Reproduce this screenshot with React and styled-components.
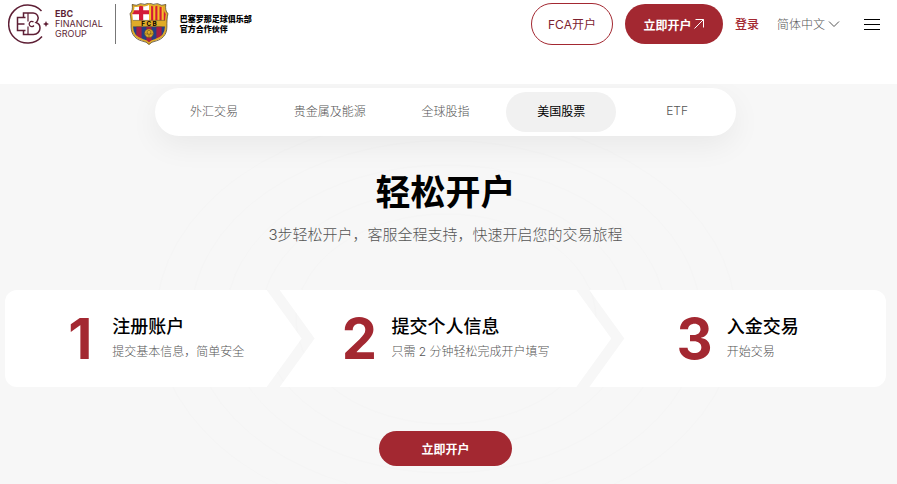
import React, { useState } from 'react';
import styled, { createGlobalStyle } from 'styled-components';

const red = '#a32831';
const wine = '#5e1f35';

const GlobalStyle = createGlobalStyle`
    * {
        box-sizing: border-box;
    }
    body {
        margin: 0;
        background: #fff;
        color: #000;
        font-family: Inter, "Noto Sans CJK SC", sans-serif;
        font-size: 12px;
    }
    button, select {
        font-family: inherit;
        font-size: 12px;
        border: 0;
        padding: 0;
        cursor: pointer;
    }
    h1, h2, p {
        margin: 0;
    }
`

const Header = styled.header`
    display: flex;
    justify-content: space-between;
    align-items: flex-start;
    height: 84px;
    padding: 0 17px 0 8px;
`

const Brand = styled.a`
    display: flex;
    align-items: center;
    height: 48px;
    color: ${wine};
    text-decoration: none;
`

const BrandName = styled.span`
    margin-left: 5px;
    font-size: 9px;
    line-height: 10px;
`

const BrandLine = styled.span`
    display: block;
    font-weight: ${props => props.$bold ? 700 : 400};
`

const Divider = styled.span`
    width: 1px;
    height: 40px;
    margin: 0 13px 0 12px;
    background: #777;
`

const PartnerText = styled.span`
    margin-left: 11px;
    color: #000;
    font-size: 8px;
    font-weight: 900;
    line-height: 10px;
`

const Actions = styled.div`
    display: flex;
    align-items: center;
    height: 48px;
`

const OutlineButton = styled.button`
    width: 82px;
    height: 42px;
    padding-bottom: 2px;
    border: 1px solid ${red};
    border-radius: 21px;
    background: #fff;
    color: #7c2230;
`

const SolidButton = styled.button`
    display: flex;
    align-items: center;
    justify-content: center;
    gap: 3px;
    width: 98px;
    height: 40px;
    margin-left: 12px;
    border-radius: 20px;
    background: ${red};
    color: #fff;
    font-weight: 600;
`

const StartButton = styled(SolidButton)`
    position: relative;
    width: 133px;
    height: 35px;
    margin-left: 0;
`

const LoginLink = styled.a`
    margin-left: 12px;
    padding-bottom: 2px;
    color: ${red};
    font-weight: 500;
    text-decoration: none;
`

const Language = styled.label`
    display: flex;
    align-items: center;
    gap: 3px;
    margin-left: 18px;
`

const LanguageSelect = styled.select`
    appearance: none;
    width: 48px;
    background: none;
    color: #555;
    font-weight: 300;
`

const MenuButton = styled.button`
    display: flex;
    margin-left: 24px;
    background: none;
`

const Section = styled.section`
    position: relative;
    display: flex;
    flex-direction: column;
    align-items: center;
    min-height: 400px;
    padding: 4px 11px 18px 5px;
    background: #f7f7f7;
    overflow: hidden;
`

const Rings = styled.svg`
    position: absolute;
    inset: 0;
    width: 100%;
    height: 100%;
`

const Tabs = styled.div`
    position: relative;
    display: grid;
    grid-template-columns: repeat(5, 1fr);
    gap: 6px;
    width: 100%;
    max-width: 581px;
    padding: 4px;
    border-radius: 24px;
    background: #fff;
    box-shadow: 0 10px 30px rgba(0, 0, 0, 0.06);
`

const Tab = styled.button`
    height: 40px;
    padding-bottom: 4px;
    border-radius: 20px;
    background: ${props => props.$active ? '#f1f1f1' : 'none'};
    color: ${props => props.$active ? '#000' : '#555'};
    font-weight: ${props => props.$active ? 400 : 300};
`

const Title = styled.h1`
    position: relative;
    margin-top: 32px;
    font-size: 35px;
    font-weight: 600;
    line-height: 48px;
`

const Subtitle = styled.p`
    position: relative;
    margin-top: 8px;
    color: #555;
    font-size: 15px;
    font-weight: 300;
    line-height: 22px;
`

const Steps = styled.div`
    position: relative;
    display: flex;
    width: 100%;
    margin: 44px 0;
`

const shapes = {
    first: 'polygon(0 0, calc(100% - 35px) 0, 100% 50%, calc(100% - 35px) 100%, 0 100%)',
    middle: 'polygon(0 0, calc(100% - 35px) 0, 100% 50%, calc(100% - 35px) 100%, 0 100%, 35px 50%)',
    last: 'polygon(0 0, 100% 0, 100% 100%, 0 100%, 35px 50%)',
}

const Step = styled.div`
    display: flex;
    align-items: center;
    justify-content: center;
    gap: 14px;
    flex: ${props => props.$shape === 'middle' ? 332 : 297} 1 0;
    height: 97px;
    background: #fff;
    clip-path: ${props => shapes[props.$shape]};

    & + & {
        margin-left: -22px;
    }
    &:first-child {
        border-radius: 12px 0 0 12px;
    }
    &:last-child {
        border-radius: 0 12px 12px 0;
    }
`

const StepNumber = styled.span`
    min-width: 36px;
    color: ${red};
    font-size: 56px;
    font-weight: 700;
    line-height: 56px;
    text-align: center;
`

const StepTitle = styled.h2`
    font-size: 18px;
    font-weight: 500;
    line-height: 24px;
`

const StepText = styled.p`
    margin-top: 3px;
    color: #555;
    font-weight: 300;
    line-height: 20px;
`

function Logo() {
    return (
        <svg width="42" height="40" viewBox="0 0 42 40" fill="none" stroke={wine} strokeWidth="1.5">
            <path d="M33.500 7A19 19 0 1 0 34 32.500" />
            <path d="M17.500 13.500H9.500v13h8M9.500 20h7" />
            <path d="M15.500 13.500V9h9.500a5 5 0 0 1 4.500 7.500q-.5 1.200-1.500 2c2.500.8 4 2.800 4 5.500a6.500 6.500 0 0 1-6.500 6.500h-10v-4" />
            <path d="M20 9v8.500M20 22.500v8" strokeWidth="1.200" />
            <path d="M25.500 18a2.600 2.600 0 1 0 .4 3.500" strokeWidth="1.300" />
            <path d="M38 17l.9 2.100 2.100.9-2.100.9L38 23l-.9-2.100L35 20l2.100-.9z" fill={wine} stroke="none" />
        </svg>
    )
}

function Crest() {
    return (
        <svg width="40" height="42" viewBox="1 1 38 41" preserveAspectRatio="none">
            <defs>
                <clipPath id="shield">
                    <path d="M5 3.500q4 1.500 7-.8 4 1.800 8-.7 4 2.500 8 .7 3 2.300 7 .8-1 5 2 8c-1 4-1 8-1 13 0 7-5 11-10 12.500q-4 .8-6 3.500-2-2.700-6-3.500C9 35.500 4 31.500 4 24.500c0-5 0-9-1-13q3-3 2-8z" />
                </clipPath>
            </defs>
            <g clipPath="url(#shield)">
                <path fill="#fff" d="M0 0h20v18H0z" />
                <path fill="#d31b37" d="M10.500 0h4v18h-4zM0 8h20v4H0z" />
                <path fill="#f4bd28" d="M20 0h20v18H20z" />
                <path fill="#d31b37" d="M22 0h2v18h-2zM26 0h2v18h-2zM30 0h2v18h-2zM34 0h2v18h-2z" />
                <path fill="#253f86" d="M0 24h40v18H0z" />
                <path fill="#a51d45" d="M8 24h5v18H8zM17.500 24h5v18h-5zM27 24h5v18h-5z" />
                <path fill="#e0ac28" stroke="#65501e" strokeWidth=".6" d="M0 18h40v6H0z" />
            </g>
            <path fill="none" stroke="#e0ac28" strokeWidth="1.800" d="M5 3.500q4 1.500 7-.8 4 1.800 8-.7 4 2.500 8 .7 3 2.300 7 .8-1 5 2 8c-1 4-1 8-1 13 0 7-5 11-10 12.500q-4 .8-6 3.500-2-2.700-6-3.500C9 35.500 4 31.500 4 24.500c0-5 0-9-1-13q3-3 2-8z" />
            <path fill="none" stroke="#4b3b22" strokeWidth=".7" d="M4 2.500q4 1.800 8-.9 4 1.900 8-.8 4 2.700 8 .8 4 2.700 8 .9-1 5.500 2 9c-1 4-1 8-1 13 0 8-5 12-10 13.500q-5 .9-7 3.500-2-2.600-7-3.500C8 36.500 3 32.500 3 24.500c0-5 0-9-1-13q3-3.500 2-9z" />
            <circle cx="20" cy="30.500" r="4.200" fill="#e0ac28" stroke="#65501e" strokeWidth=".5" />
            <path d="M18 29l2-1.500 2 1.500-.8 2.400h-2.400zM16 31l2.800.4M24 31l-2.800.4M20 34.500v-3" fill="none" stroke="#65501e" strokeWidth=".6" />
            <text x="20" y="23.200" textAnchor="middle" fontSize="6" fontWeight="700">F C B</text>
        </svg>
    )
}

const tabs = ['外汇交易', '贵金属及能源', '全球股指', '美国股票', 'ETF']

const steps = [
    { shape: 'first', title: '注册账户', text: '提交基本信息，简单安全' },
    { shape: 'middle', title: '提交个人信息', text: '只需 2 分钟轻松完成开户填写' },
    { shape: 'last', title: '入金交易', text: '开始交易' },
]

const rings = [150, 185, 220, 255, 290]

export default function App() {
    const [active, setActive] = useState('美国股票')

    return (
        <>
            <GlobalStyle />
            <Header>
                <Brand href="#">
                    <Logo />
                    <BrandName>
                        <BrandLine $bold>EBC</BrandLine>
                        <BrandLine>FINANCIAL</BrandLine>
                        <BrandLine>GROUP</BrandLine>
                    </BrandName>
                    <Divider />
                    <Crest />
                    <PartnerText>巴塞罗那足球俱乐部<br />官方合作伙伴</PartnerText>
                </Brand>
                <Actions>
                    <OutlineButton>FCA开户</OutlineButton>
                    <SolidButton>
                        立即开户
                        <svg width="10" height="10" viewBox="0 0 10 10" fill="none" stroke="#fff">
                            <path d="M.5 9.500l9-9M1.500.5h8v8" />
                        </svg>
                    </SolidButton>
                    <LoginLink href="#">登录</LoginLink>
                    <Language>
                        <LanguageSelect aria-label="语言">
                            <option>简体中文</option>
                        </LanguageSelect>
                        <svg width="12" height="8" viewBox="0 0 12 8" fill="none" stroke="#555">
                            <path d="M1 1.500l5 5 5-5" />
                        </svg>
                    </Language>
                    <MenuButton aria-label="菜单">
                        <svg width="16" height="12" viewBox="0 0 16 12" stroke="#000">
                            <path d="M0 1.500h16M0 6.500h16M0 11.500h16" />
                        </svg>
                    </MenuButton>
                </Actions>
            </Header>
            <Section>
                <Rings viewBox="0 0 897 400" preserveAspectRatio="xMidYMid slice" fill="none" stroke="#f5f5f5">
                    {rings.map(r => <ellipse key={r} cx="446" cy="235" rx={r} ry={r * 0.7} />)}
                </Rings>
                <Tabs>
                    {tabs.map(tab => (
                        <Tab key={tab} $active={tab === active} onClick={() => setActive(tab)}>{tab}</Tab>
                    ))}
                </Tabs>
                <Title>轻松开户</Title>
                <Subtitle>3步轻松开户，客服全程支持，快速开启您的交易旅程</Subtitle>
                <Steps>
                    {steps.map((step, i) => (
                        <Step key={step.title} $shape={step.shape}>
                            <StepNumber>{i + 1}</StepNumber>
                            <div>
                                <StepTitle>{step.title}</StepTitle>
                                <StepText>{step.text}</StepText>
                            </div>
                        </Step>
                    ))}
                </Steps>
                <StartButton>立即开户</StartButton>
            </Section>
        </>
    )
}
